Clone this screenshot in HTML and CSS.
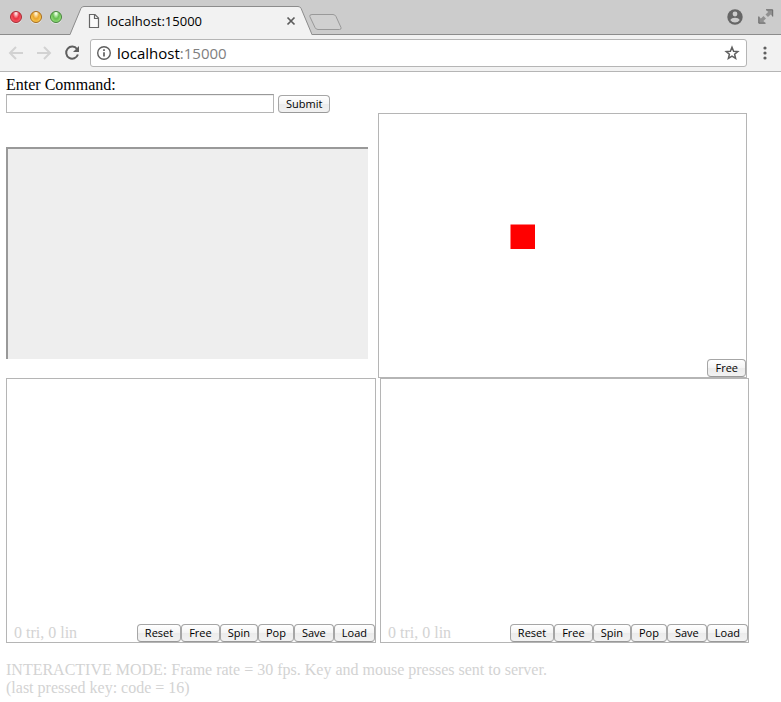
FILE: index.html
```html
<!DOCTYPE html>
<html lang="en">
<head>
<meta charset="utf-8">
<title>localhost:15000</title>
<link rel="stylesheet" href="styles.css">
</head>
<body>
<header class="browser">
  <div class="tabstrip">
    <div class="lights">
      <button class="light red" aria-label="Close window"></button>
      <button class="light amber" aria-label="Minimize window"></button>
      <button class="light green" aria-label="Zoom window"></button>
    </div>
    <div class="tab">
      <svg class="tab-edge" width="15" height="29" viewBox="0 0 15 29" aria-hidden="true"><path d="M0 29L11 2.200Q12 .5 14 .5H15V29Z" fill="#f2f2f2"/><path d="M0 28.500L11 2.200Q12 .5 14 .5H15" fill="none" stroke="#8c8c8c"/></svg>
      <div class="tab-body">
        <svg width="12" height="16" viewBox="0 0 12 16" aria-hidden="true"><path d="M1.500 1.500H7L10.500 5V14.500H1.500ZM6.500 1.500V5.500H10.500" fill="#fafafa" stroke="#666" stroke-width="1.200"/></svg>
        <span class="tab-title">localhost:15000</span>
        <button class="icon-button" aria-label="Close tab"><svg width="10" height="10" viewBox="0 0 10 10"><path d="M1.500 1.500L8.500 8.500M8.500 1.500L1.500 8.500" stroke="#5c5c5c" stroke-width="1.700"/></svg></button>
      </div>
      <svg class="tab-edge" width="15" height="29" viewBox="0 0 15 29" aria-hidden="true"><path d="M15 29L4 2.200Q3 .5 1 .5H0V29Z" fill="#f2f2f2"/><path d="M15 28.500L4 2.200Q3 .5 1 .5H0" fill="none" stroke="#8c8c8c"/></svg>
    </div>
    <button class="icon-button new-tab" aria-label="New tab"><svg width="36" height="18" viewBox="0 0 36 18"><path d="M4 1.500H25Q27 1.500 28 3.500L33 14.500Q33.500 16.500 31.500 16.500H10Q8 16.500 7 14.500L1.800 3.500Q1.300 1.500 4 1.500Z" fill="#d0d0d0" stroke="#999"/></svg></button>
    <div class="window-tools">
      <button class="icon-button" aria-label="Profile"><svg width="16" height="16" viewBox="0 0 16 16"><circle cx="8" cy="8" r="7.700" fill="#666"/><circle cx="8" cy="5" r="2.400" fill="#ccc"/><path d="M3.200 11Q4.500 8.800 8 8.800T12.800 11Q11 13.600 8 13.600T3.200 11Z" fill="#ccc"/></svg></button>
      <button class="icon-button" aria-label="Full screen"><svg width="16" height="16" viewBox="0 0 16 16"><path d="M8 .8H14.700V7.500L12.600 5.400L10 8L7.500 5.500L10.100 2.900ZM.8 7.500L2.900 9.600L5.500 7L8 9.500L5.400 12.100L7.500 14.200H.8Z" fill="#919191"/><path d="M8 .8H14.700V7.500M.8 7.500V14.200H7.500" fill="none" stroke="#696969"/></svg></button>
    </div>
  </div>
  <div class="toolbar">
    <button class="icon-button" aria-label="Back"><svg width="16" height="16" viewBox="0 0 16 16"><path d="M15 8H2M8 2L2 8L8 14" fill="none" stroke="#d2d2d2" stroke-width="2"/></svg></button>
    <button class="icon-button" aria-label="Forward"><svg width="16" height="16" viewBox="0 0 16 16"><path d="M1 8H14M8 2L14 8L8 14" fill="none" stroke="#d2d2d2" stroke-width="2"/></svg></button>
    <button class="icon-button" aria-label="Reload"><svg width="16" height="16" viewBox="0 0 16 16"><path d="M13 4A6 6 0 1 0 13.900 9.500" fill="none" stroke="#5f5f5f" stroke-width="2"/><path d="M15 1V7H9Z" fill="#5f5f5f"/></svg></button>
    <div class="omnibox">
      <svg width="16" height="16" viewBox="0 0 16 16" aria-hidden="true"><circle cx="8" cy="8" r="6.300" fill="none" stroke="#5f5f5f" stroke-width="1.400"/><path d="M8 7.200V11.500M8 4.300V6" stroke="#5f5f5f" stroke-width="1.700"/></svg>
      <span class="url">localhost<span class="port">:15000</span></span>
      <button class="icon-button" aria-label="Bookmark"><svg width="16" height="16" viewBox="0 0 16 16"><path d="M8 2.300L9.600 6.200L13.800 6.500L10.600 9.200L11.600 13.300L8 11.100L4.400 13.300L5.400 9.200L2.200 6.500L6.400 6.200Z" fill="none" stroke="#5f5f5f" stroke-width="1.500"/></svg></button>
    </div>
    <button class="icon-button" aria-label="Menu"><svg width="4" height="14" viewBox="0 0 4 14"><circle cx="2" cy="2" r="1.600" fill="#5f5f5f"/><circle cx="2" cy="7" r="1.600" fill="#5f5f5f"/><circle cx="2" cy="12" r="1.600" fill="#5f5f5f"/></svg></button>
  </div>
</header>
<main class="page">
  <form class="command">
    <label for="command">Enter Command:</label>
    <div class="command-row">
      <input id="command" type="text">
      <button class="push" type="button">Submit</button>
    </div>
  </form>
  <div class="views top">
    <div class="console"></div>
    <section class="view">
      <svg class="scene" viewBox="0 0 367 263" aria-hidden="true"><rect x="131.500" y="110.500" width="24.500" height="24.500" fill="#f00"/></svg>
      <div class="controls"><button class="push">Free</button></div>
    </section>
  </div>
  <div class="views bottom">
    <section class="view">
      <div class="controls">
        <span class="stats">0 tri, 0 lin</span>
        <button class="push">Reset</button><button class="push">Free</button><button class="push">Spin</button><button class="push">Pop</button><button class="push">Save</button><button class="push">Load</button>
      </div>
    </section>
    <section class="view">
      <div class="controls">
        <span class="stats">0 tri, 0 lin</span>
        <button class="push">Reset</button><button class="push">Free</button><button class="push">Spin</button><button class="push">Pop</button><button class="push">Save</button><button class="push">Load</button>
      </div>
    </section>
  </div>
  <p class="status">INTERACTIVE MODE: Frame rate = 30 fps. Key and mouse presses sent to server.<br>(last pressed key: code = 16)</p>
</main>
</body>
</html>
```
FILE: styles.css
```css
* {
  box-sizing: border-box;
}

body {
  margin: 0;
  background: #fff;
  color: #000;
  font: 16px/18px "Liberation Serif", serif;
}

svg {
  display: block;
  flex: none;
}

.browser {
  font-family: "Open Sans", sans-serif;
}

.icon-button {
  flex: none;
  padding: 0;
  border: 0;
  background: none;
}

.tabstrip {
  display: flex;
  height: 35px;
  padding: 0 8px 0 10px;
  background: #ccc;
  box-shadow: inset 0 -1px #8c8c8c;
}

.lights {
  display: flex;
  gap: 8px;
  padding-top: 11px;
}

.light {
  width: 12px;
  height: 12px;
  padding: 0;
  border: 1px solid;
  border-radius: 50%;
  box-shadow: 0 1px #e4e4e4;
}

.red {
  border-color: #a92831;
  background: radial-gradient(ellipse at 50% 10%, #ffd9dc 10%, #e83240 45%, #ff7480);
}

.amber {
  border-color: #a96b18;
  background: radial-gradient(ellipse at 50% 10%, #fff2cf 10%, #eba52c 45%, #ffe470);
}

.green {
  border-color: #45853a;
  background: radial-gradient(ellipse at 50% 10%, #e6ffdf 10%, #66be50 45%, #b5f59a);
}

.tab {
  display: flex;
  flex: 0 1 242px;
  margin: 6px 0 0 8px;
}

.tab-body {
  display: flex;
  flex: 1;
  align-items: center;
  height: 29px;
  padding: 0 1px 0 3px;
  border-top: 1px solid #8c8c8c;
  background: #f2f2f2;
}

.tab-title {
  flex: 1;
  padding-left: 7px;
  font-size: 13px;
}

.new-tab {
  align-self: flex-start;
  margin: 13px 0 0 -4px;
}

.window-tools {
  display: flex;
  gap: 15px;
  align-items: center;
  margin-left: auto;
  margin-right: -1px;
  padding-bottom: 2px;
}

.toolbar {
  display: flex;
  gap: 12px;
  align-items: center;
  height: 37px;
  padding: 0 14px 0 8px;
  border-bottom: 1px solid #b5b5b5;
  background: #f2f2f2;
}

.omnibox {
  display: flex;
  flex: 1;
  gap: 5px;
  align-items: center;
  height: 28px;
  margin: 0 4px 0 -2px;
  padding: 0 6px 0 5px;
  border: 1px solid #b5b5b5;
  border-radius: 3px;
  background: #fff;
}

.url {
  flex: 1;
  font-size: 15px;
}

.port {
  color: #808080;
}

.page {
  padding: 4px 32px 4px 6px;
}

.command label {
  display: block;
}

.command-row {
  display: flex;
  gap: 4px;
  align-items: flex-end;
}

.command input {
  width: 268px;
  height: 19px;
  padding: 1px 3px;
  border: 1px solid #b5b5b5;
  border-top-color: #999;
  box-shadow: inset 0 1px #eee;
  font: 11px "Open Sans", sans-serif;
}

.push {
  height: 18px;
  padding: 0 7px;
  border: 1px solid #a6a6a6;
  border-bottom-color: #999;
  border-radius: 4px;
  background: linear-gradient(#fff, #f4f4f4 50%, #ebebeb 50%, #f2f2f2);
  color: #000;
  font: 500 11px/16px "Open Sans", sans-serif;
}

.views {
  display: grid;
}

.top {
  grid-template-columns: 362fr 369fr;
  gap: 10px;
  align-items: end;
  margin-right: 2px;
}

.bottom {
  grid-template-columns: 370fr 369fr;
  gap: 4px;
}

.console {
  height: 212px;
  margin-bottom: 19px;
  border-top: 2px solid #999;
  border-left: 2px solid #999;
  background: #eee;
}

.view {
  display: grid;
  height: 265px;
  border: 1px solid #b5b5b5;
}

.scene,
.controls {
  grid-area: 1 / 1;
}

.scene {
  width: 100%;
}

.controls {
  display: flex;
  align-self: end;
  justify-content: flex-end;
}

.stats {
  margin-right: auto;
  padding-left: 7px;
}

.stats,
.status {
  color: #d3d3d3;
}

.status {
  margin: 18px 0 0;
}
```
